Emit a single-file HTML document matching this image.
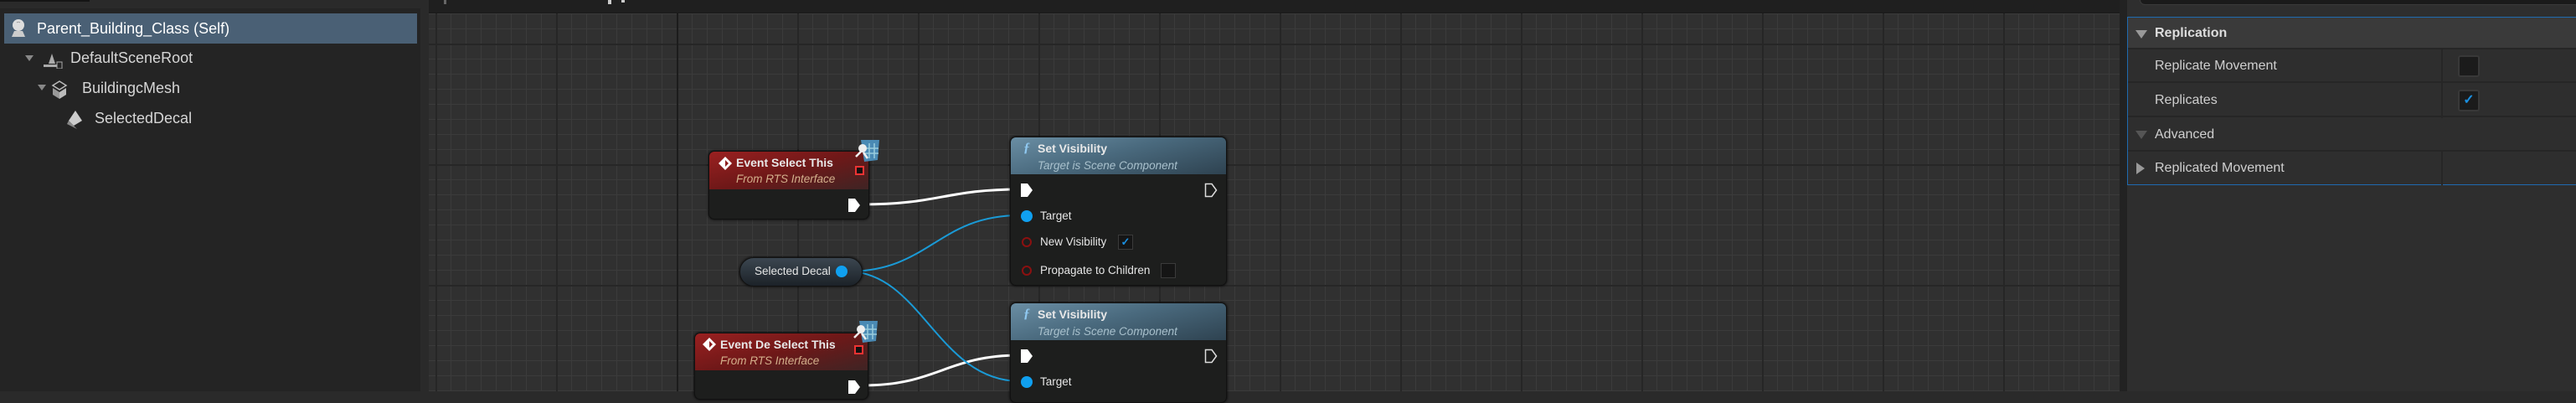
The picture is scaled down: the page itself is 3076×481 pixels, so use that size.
<!DOCTYPE html>
<html><head><meta charset="utf-8">
<style>
*{margin:0;padding:0;box-sizing:border-box}
body{width:3076px;height:467px;overflow:hidden;background:#2a2a2a;font-family:"Liberation Sans",sans-serif;position:relative}
.abs{position:absolute}
#left{left:0;top:10px;width:502px;height:457px;background:#242424}
.row{position:absolute;height:36px;line-height:36px;font-size:18px;color:#d6d6d6;white-space:nowrap}
#grid{left:512px;top:0;width:2019px;height:467px;background-color:#303030;
background-image:
linear-gradient(90deg,#1c1c1c 0 2px,transparent 2px),
linear-gradient(0deg,transparent calc(100% - 2px),#1e1e1e calc(100% - 2px)),
linear-gradient(90deg,#262626 0 2px,transparent 2px),
linear-gradient(180deg,#262626 0 2px,transparent 2px),
linear-gradient(90deg,#3b3b3b 0 1px,transparent 1px),
linear-gradient(180deg,#3b3b3b 0 1px,transparent 1px);
background-size:2019px 467px,2019px 342px,144px 144px,144px 144px,18px 18px,18px 18px;
background-position:296px 0,0 0,8px 52px,0 52px,8px 16px,0 16px;
background-repeat:no-repeat,no-repeat,repeat,repeat,repeat,repeat}
#topbar{left:512px;top:0;width:2019px;height:16px;background:#1f1f1f;border-bottom:1px solid #191919}
#right{left:2540px;top:0;width:536px;height:467px;background:#2e2e2e}
.node{position:absolute;border-radius:7px;background:#1d1e1d;box-shadow:0 0 3px #000;border:1px solid #111;overflow:hidden}
.ttl{position:absolute;font-size:14px;font-weight:bold;color:#e8e8e8;white-space:nowrap}
.sub{position:absolute;font-size:13.5px;font-style:italic;white-space:nowrap}
.pt{position:absolute;font-size:13.5px;color:#e6e6e6;white-space:nowrap}
.prow{position:absolute;left:0;width:536px;height:40px;border-bottom:2px solid #262626;font-size:16px;color:#cfcfcf;line-height:40px}
.vh{position:absolute;left:0;top:0;width:259px;height:44px;background:linear-gradient(165deg,#6a8ea4,#4a6a7e 45%,#2e4250)}
.rh{position:absolute;left:0;top:0;height:45px;background:linear-gradient(165deg,#9a2020,#6e1818 50%,#3e2424)}
</style></head><body>
<div class="abs" style="left:0;top:0;width:107px;height:2px;background:#151515"></div>
<div id="left" class="abs"></div>
<div class="abs" style="left:5px;top:16px;width:493px;height:36px;background:#4a6075"></div>
<svg class="abs" style="left:8px;top:20px" width="28" height="28"><circle cx="14" cy="10" r="7" fill="#ddd"/><path d="M12 7a3 3 0 0 1 4 0" stroke="#999" fill="none"/><path d="M6 24 L9 17 H19 L22 24 Z" fill="#ccc"/></svg>
<div class="row" style="left:44px;top:16px;color:#fff">Parent_Building_Class (Self)</div>
<svg class="abs" style="left:28px;top:62px" width="60" height="20"><path d="M2 4 H12 L7 11 Z" fill="#888"/><path d="M30 14 L34 2 L38 14 Z M24 15 H40 V18 H24Z" fill="#aaa"/><rect x="40" y="12" width="6" height="8" fill="none" stroke="#aaa"/></svg>
<div class="row" style="left:84px;top:51px">DefaultSceneRoot</div>
<svg class="abs" style="left:43px;top:95px" width="40" height="24"><path d="M2 6 H12 L7 13 Z" fill="#888"/><path d="M28 2 L36 7 L28 12 L20 7Z" fill="none" stroke="#bbb" stroke-width="1.5"/><path d="M20 10 L28 15 V23 L20 18Z" fill="#999"/><path d="M36 10 L28 15 V23 L36 18Z" fill="#bbb"/></svg>
<div class="row" style="left:98px;top:87px">BuildingcMesh</div>
<svg class="abs" style="left:78px;top:130px" width="28" height="26"><path d="M12 2 L20 14 L10 20 L4 14 Z" fill="#ccc"/><path d="M4 14 L10 20 L14 24 L2 18Z" fill="#888"/></svg>
<div class="row" style="left:113px;top:123px">SelectedDecal</div>

<div id="grid" class="abs"></div>
<div id="topbar" class="abs"></div>
<div class="abs" style="left:530px;top:0;width:3px;height:5px;background:#666"></div>
<div class="abs" style="left:726px;top:0;width:4px;height:5px;background:#ccc"></div>
<div class="abs" style="left:742px;top:0;width:4px;height:3px;background:#ccc"></div>

<svg class="abs" style="left:0;top:0" width="3076" height="467">
<path d="M1030 244 C1120 244,1130 226,1218 226" stroke="#fff" stroke-width="3" fill="none"/>
<path d="M1030 460 C1120 460,1130 424,1218 424" stroke="#fff" stroke-width="3" fill="none"/>
<path d="M1012 324 C1110 324,1120 257,1218 257" stroke="#1a9ad6" stroke-width="2" fill="none"/>
<path d="M1012 324 C1100 324,1120 455,1218 455" stroke="#1a9ad6" stroke-width="2" fill="none"/>
</svg>

<div class="node" style="left:846px;top:180px;width:192px;height:82px">
 <div class="rh" style="width:192px"></div>
 <svg class="abs" style="left:10px;top:5px" width="18" height="18"><path d="M9 1 L17 9 L9 17 L1 9Z" fill="#fff"/><path d="M9 5 L13 9 L9 13 Z" fill="#8d1c1c"/></svg>
 <div class="ttl" style="left:32px;top:5px">Event Select This</div>
 <div class="sub" style="left:32px;top:25px;color:#d4b08c">From RTS Interface</div>
 <div class="abs" style="left:174px;top:17px;width:11px;height:11px;border:2px solid #e33;background:#111"></div>
 <svg class="abs" style="left:165px;top:55px" width="16" height="18"><path d="M1 1 H9 L15 9 L9 17 H1Z" fill="#fff"/></svg>
</div>
<svg class="abs" style="left:1018px;top:165px" width="34" height="30"><path d="M10 2 L32 2 L30 26 L14 28Z" fill="#4a8ab4"/><path d="M20 6 V24 M26 6 V24 M14 12 H31 M14 18 H31" stroke="#9cd" stroke-width="1.5"/><circle cx="12" cy="12" r="5" fill="#eee"/><path d="M4 22 L10 16 M18 24 L13 17" stroke="#eee" stroke-width="2.5"/></svg>

<div class="node" style="left:829px;top:397px;width:208px;height:80px">
 <div class="rh" style="width:208px;height:44px"></div>
 <svg class="abs" style="left:8px;top:4px" width="18" height="18"><path d="M9 1 L17 9 L9 17 L1 9Z" fill="#fff"/><path d="M9 5 L13 9 L9 13 Z" fill="#8d1c1c"/></svg>
 <div class="ttl" style="left:30px;top:5px">Event De Select This</div>
 <div class="sub" style="left:30px;top:25px;color:#d4b08c">From RTS Interface</div>
 <div class="abs" style="left:190px;top:14px;width:11px;height:11px;border:2px solid #e33;background:#111"></div>
 <svg class="abs" style="left:182px;top:55px" width="16" height="18"><path d="M1 1 H9 L15 9 L9 17 H1Z" fill="#fff"/></svg>
</div>
<svg class="abs" style="left:1016px;top:381px" width="34" height="30"><path d="M10 2 L32 2 L30 26 L14 28Z" fill="#4a8ab4"/><path d="M20 6 V24 M26 6 V24 M14 12 H31 M14 18 H31" stroke="#9cd" stroke-width="1.5"/><circle cx="12" cy="12" r="5" fill="#eee"/><path d="M4 22 L10 16 M18 24 L13 17" stroke="#eee" stroke-width="2.5"/></svg>

<div class="abs" style="left:883px;top:307px;width:147px;height:35px;border-radius:17px;background:linear-gradient(180deg,#3b4650,#1c2228);border:1px solid #111;box-shadow:0 0 3px #000"></div>
<div class="pt" style="left:901px;top:316px">Selected Decal</div>
<div class="abs" style="left:998px;top:317px;width:14px;height:14px;border-radius:50%;background:#10a0f0"></div>

<div class="node" style="left:1206px;top:163px;width:259px;height:178px">
 <div class="vh"></div>
 <div class="ttl" style="left:15px;top:4px;font-style:italic;color:#8fc8f0;font-family:'Liberation Serif',serif;font-size:16px">ƒ</div>
 <div class="ttl" style="left:32px;top:5px">Set Visibility</div>
 <div class="sub" style="left:32px;top:26px;color:#a8c0cc">Target is Scene Component</div>
 <svg class="abs" style="left:11px;top:54px" width="16" height="18"><path d="M1 1 H9 L15 9 L9 17 H1Z" fill="#fff"/></svg>
 <svg class="abs" style="left:231px;top:54px" width="16" height="18"><path d="M1.5 1.5 H9 L14.5 9 L9 16.5 H1.5Z" fill="none" stroke="#ddd" stroke-width="1.5"/></svg>
 <div class="abs" style="left:12px;top:87px;width:14px;height:14px;border-radius:50%;background:#10a0f0"></div>
 <div class="pt" style="left:35px;top:86px">Target</div>
 <div class="abs" style="left:13px;top:119px;width:12px;height:12px;border-radius:50%;border:2px solid #8b1010"></div>
 <div class="pt" style="left:35px;top:117px">New Visibility</div>
 <div class="abs" style="left:128px;top:116px;width:18px;height:18px;border:1px solid #3a3a3a;background:#151515;color:#1a8fe0;font-size:13px;line-height:16px;text-align:center;font-weight:bold">✓</div>
 <div class="abs" style="left:13px;top:153px;width:12px;height:12px;border-radius:50%;border:2px solid #8b1010"></div>
 <div class="pt" style="left:35px;top:151px">Propagate to Children</div>
 <div class="abs" style="left:179px;top:150px;width:18px;height:18px;border:1px solid #3a3a3a;background:#151515"></div>
</div>

<div class="node" style="left:1206px;top:361px;width:259px;height:120px">
 <div class="vh"></div>
 <div class="ttl" style="left:15px;top:4px;font-style:italic;color:#8fc8f0;font-family:'Liberation Serif',serif;font-size:16px">ƒ</div>
 <div class="ttl" style="left:32px;top:5px">Set Visibility</div>
 <div class="sub" style="left:32px;top:26px;color:#a8c0cc">Target is Scene Component</div>
 <svg class="abs" style="left:11px;top:54px" width="16" height="18"><path d="M1 1 H9 L15 9 L9 17 H1Z" fill="#fff"/></svg>
 <svg class="abs" style="left:231px;top:54px" width="16" height="18"><path d="M1.5 1.5 H9 L14.5 9 L9 16.5 H1.5Z" fill="none" stroke="#ddd" stroke-width="1.5"/></svg>
 <div class="abs" style="left:12px;top:87px;width:14px;height:14px;border-radius:50%;background:#10a0f0"></div>
 <div class="pt" style="left:35px;top:86px">Target</div>
</div>

<div class="abs" style="left:2531px;top:0;width:9px;height:467px;background:#222"></div>
<div id="right" class="abs">
 <div class="abs" style="left:15px;top:-8px;width:540px;height:14px;border-radius:6px;background:#1a1a1a;border:1px solid #3a3a3a"></div>
 <div class="abs" style="left:0;top:20px;width:536px;height:201px;border:1px solid #1f6ab0;border-right:none;background:#2e2e2e">
  <div class="prow" style="top:0;height:38px;background:#3a3a3a;font-weight:bold;color:#ddd;line-height:38px"><span class="abs" style="left:9px;top:15px;width:0;height:0;border-left:7px solid transparent;border-right:7px solid transparent;border-top:10px solid #999"></span><span style="margin-left:32px">Replication</span></div>
  <div class="prow" style="top:38px"><span style="margin-left:32px">Replicate Movement</span></div>
  <div class="prow" style="top:79px"><span style="margin-left:32px">Replicates</span></div>
  <div class="prow" style="top:120px"><span class="abs" style="left:9px;top:15px;width:0;height:0;border-left:7px solid transparent;border-right:7px solid transparent;border-top:10px solid #555"></span><span style="margin-left:32px">Advanced</span></div>
  <div class="prow" style="top:160px;border-bottom:none"><span class="abs" style="left:10px;top:13px;width:0;height:0;border-top:7px solid transparent;border-bottom:7px solid transparent;border-left:10px solid #999"></span><span style="margin-left:32px">Replicated Movement</span></div>
  <div class="abs" style="left:374px;top:38px;width:2px;height:82px;background:#262626"></div>
  <div class="abs" style="left:374px;top:160px;width:2px;height:40px;background:#262626"></div>
  <div class="abs" style="left:394px;top:45px;width:26px;height:26px;border:2px solid #383838;border-radius:3px;background:#1b1b1b"></div>
  <div class="abs" style="left:394px;top:86px;width:26px;height:26px;border:2px solid #383838;border-radius:3px;background:#1b1b1b;color:#1a8fe0;font-weight:bold;font-size:16px;line-height:22px;text-align:center">✓</div>
 </div>
</div>
</body></html>
